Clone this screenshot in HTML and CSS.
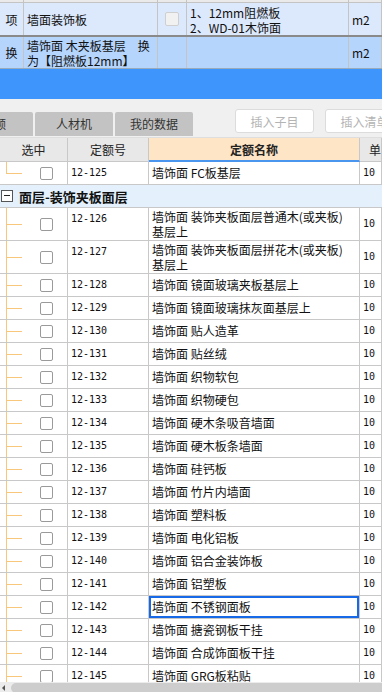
FILE: index.html
```html
<!DOCTYPE html>
<html lang="zh-CN">
<head>
    <meta charset="UTF-8">
    <meta name="viewport" content="width=device-width, initial-scale=1.0">
    <title>定额库</title>
    <link rel="stylesheet" href="styles.css">
</head>
<body>
    <!-- 清单/定额 上方表格 -->
    <div class="top">
        <div class="top-head">
            <div class="tcell c">类别</div>
            <div class="tcell">名称</div>
            <div class="tcell c">锁定</div>
            <div class="tcell">项目特征</div>
            <div class="tcell">单位</div>
        </div>
        <div class="top-row item">
            <div class="tcell c">项</div>
            <div class="tcell">墙面装饰板</div>
            <div class="tcell c"><span class="lock"></span></div>
            <div class="tcell multi">1、12mm阻燃板<br>2、WD-01木饰面</div>
            <div class="tcell">m2</div>
        </div>
        <div class="top-row sel">
            <div class="tcell c">换</div>
            <div class="tcell multi">墙饰面 木夹板基层　换<br>为【阻燃板12mm】</div>
            <div class="tcell"></div>
            <div class="tcell"></div>
            <div class="tcell">m2</div>
        </div>
    </div>
    <div class="bar"></div>

    <div class="toolbar">
        <div class="tabs">
            <div class="tab">定额</div>
            <div class="tab">人材机</div>
            <div class="tab">我的数据</div>
        </div>
        <div class="btns">
            <button class="btn">插入子目</button>
            <button class="btn">插入清单</button>
        </div>
    </div>

    <div class="grid">
        <div class="row head">
            <div class="cell c">选中</div>
            <div class="cell c">定额号</div>
            <div class="cell c name-head">定额名称</div>
            <div class="cell unit-head">单位</div>
        </div>
        <div class="body">
            <div class="row">
                <div class="cell chk end"><span class="box"></span></div>
                <div class="cell code">12-125</div>
                <div class="cell">墙饰面 FC板基层</div>
                <div class="cell unit">10</div>
            </div>
            <div class="group"><span class="minus"></span>面层-装饰夹板面层</div>
            <div class="row tall">
                <div class="cell chk"><span class="box"></span></div>
                <div class="cell code">12-126</div>
                <div class="cell multi">墙饰面 装饰夹板面层普通木(或夹板)<br>基层上</div>
                <div class="cell unit">10</div>
            </div>
            <div class="row tall">
                <div class="cell chk"><span class="box"></span></div>
                <div class="cell code">12-127</div>
                <div class="cell multi">墙饰面 装饰夹板面层拼花木(或夹板)<br>基层上</div>
                <div class="cell unit">10</div>
            </div>
            <div class="row">
                <div class="cell chk"><span class="box"></span></div>
                <div class="cell code">12-128</div>
                <div class="cell">墙饰面 镜面玻璃夹板基层上</div>
                <div class="cell unit">10</div>
            </div>
            <div class="row">
                <div class="cell chk"><span class="box"></span></div>
                <div class="cell code">12-129</div>
                <div class="cell">墙饰面 镜面玻璃抹灰面基层上</div>
                <div class="cell unit">10</div>
            </div>
            <div class="row">
                <div class="cell chk"><span class="box"></span></div>
                <div class="cell code">12-130</div>
                <div class="cell">墙饰面 贴人造革</div>
                <div class="cell unit">10</div>
            </div>
            <div class="row">
                <div class="cell chk"><span class="box"></span></div>
                <div class="cell code">12-131</div>
                <div class="cell">墙饰面 贴丝绒</div>
                <div class="cell unit">10</div>
            </div>
            <div class="row">
                <div class="cell chk"><span class="box"></span></div>
                <div class="cell code">12-132</div>
                <div class="cell">墙饰面 织物软包</div>
                <div class="cell unit">10</div>
            </div>
            <div class="row">
                <div class="cell chk"><span class="box"></span></div>
                <div class="cell code">12-133</div>
                <div class="cell">墙饰面 织物硬包</div>
                <div class="cell unit">10</div>
            </div>
            <div class="row">
                <div class="cell chk"><span class="box"></span></div>
                <div class="cell code">12-134</div>
                <div class="cell">墙饰面 硬木条吸音墙面</div>
                <div class="cell unit">10</div>
            </div>
            <div class="row">
                <div class="cell chk"><span class="box"></span></div>
                <div class="cell code">12-135</div>
                <div class="cell">墙饰面 硬木板条墙面</div>
                <div class="cell unit">10</div>
            </div>
            <div class="row">
                <div class="cell chk"><span class="box"></span></div>
                <div class="cell code">12-136</div>
                <div class="cell">墙饰面 硅钙板</div>
                <div class="cell unit">10</div>
            </div>
            <div class="row">
                <div class="cell chk"><span class="box"></span></div>
                <div class="cell code">12-137</div>
                <div class="cell">墙饰面 竹片内墙面</div>
                <div class="cell unit">10</div>
            </div>
            <div class="row">
                <div class="cell chk"><span class="box"></span></div>
                <div class="cell code">12-138</div>
                <div class="cell">墙饰面 塑料板</div>
                <div class="cell unit">10</div>
            </div>
            <div class="row">
                <div class="cell chk"><span class="box"></span></div>
                <div class="cell code">12-139</div>
                <div class="cell">墙饰面 电化铝板</div>
                <div class="cell unit">10</div>
            </div>
            <div class="row">
                <div class="cell chk"><span class="box"></span></div>
                <div class="cell code">12-140</div>
                <div class="cell">墙饰面 铝合金装饰板</div>
                <div class="cell unit">10</div>
            </div>
            <div class="row">
                <div class="cell chk"><span class="box"></span></div>
                <div class="cell code">12-141</div>
                <div class="cell">墙饰面 铝塑板</div>
                <div class="cell unit">10</div>
            </div>
            <div class="row">
                <div class="cell chk"><span class="box"></span></div>
                <div class="cell code">12-142</div>
                <div class="cell focus">墙饰面 不锈钢面板</div>
                <div class="cell unit">10</div>
            </div>
            <div class="row">
                <div class="cell chk"><span class="box"></span></div>
                <div class="cell code">12-143</div>
                <div class="cell">墙饰面 搪瓷钢板干挂</div>
                <div class="cell unit">10</div>
            </div>
            <div class="row">
                <div class="cell chk"><span class="box"></span></div>
                <div class="cell code">12-144</div>
                <div class="cell">墙饰面 合成饰面板干挂</div>
                <div class="cell unit">10</div>
            </div>
            <div class="row">
                <div class="cell chk"><span class="box"></span></div>
                <div class="cell code">12-145</div>
                <div class="cell">墙饰面 GRG板粘贴</div>
                <div class="cell unit">10</div>
            </div>
        </div>
    </div>

    <div class="hscroll">
        <span class="arrow"></span>
        <span class="thumb"></span>
    </div>
</body>
</html>
```

FILE: styles.css
```css
body {
    margin: 0;
    width: 382px;
    height: 692px;
    overflow: hidden;
    font-family: "Noto Sans CJK SC", sans-serif;
    font-size: 12px;
    color: #111;
    background: #fff;
}

/* upper table */
.top {
    overflow: hidden;
}
.top-head, .top-row {
    display: grid;
    grid-template-columns: 24px 134px 29px 162px 33px;
}
.top-head {
    height: 22px;
    margin-top: -19px;
    background: #eaeaea;
    border-bottom: 1px solid #c4c4c4;
    box-sizing: border-box;
}
.tcell {
    border-right: 1px solid #c4c4c4;
    padding-left: 3px;
    display: flex;
    align-items: center;
    white-space: nowrap;
    overflow: hidden;
}
.tcell.c {
    justify-content: center;
    padding-left: 0;
}
.tcell.multi {
    line-height: 15px;
}
.top-row.item {
    height: 32px;
    background: #dce8fc;
    border-bottom: 2px solid #8a8a8a;
}
.top-row.sel {
    height: 31px;
    background: #b5d5fd;
    border-bottom: 1px solid #9ab;
}
.lock {
    width: 12px;
    height: 12px;
    border: 1px solid #cfcfcf;
    border-radius: 2px;
    background: #f1f1f1;
}
.bar {
    height: 30px;
    background: #3e96fc;
}

/* toolbar with tabs */
.toolbar {
    height: 38px;
    background: #f0f0f0;
    display: flex;
    align-items: flex-end;
    overflow: hidden;
}
.tabs {
    display: flex;
    gap: 2px;
    margin-left: -45px;
    margin-bottom: 1px;
}
.tab {
    width: 78px;
    height: 24px;
    line-height: 24px;
    text-align: center;
    background: #c3c3c3;
    color: #333;
    border-radius: 2px 2px 0 0;
    font-size: 12px;
}
.btns {
    display: flex;
    gap: 11px;
    align-self: flex-start;
    margin-top: 10px;
    margin-left: 42px;
}
.btn {
    width: 79px;
    height: 24px;
    flex-shrink: 0;
    border: 1px solid #dcdcdc;
    border-radius: 3px;
    background: #fff;
    color: #b4b4b4;
    font-family: "Noto Sans CJK SC", sans-serif;
    font-size: 12px;
    padding: 0;
}

/* lower table */
.row {
    display: grid;
    grid-template-columns: 68px 81px 211px 22px;
    height: 23px;
}
.row.tall {
    height: 33px;
}
.cell {
    border-right: 1px solid #c8c8c8;
    border-bottom: 1px solid #c8c8c8;
    padding-left: 3px;
    line-height: 22px;
    white-space: nowrap;
    overflow: hidden;
    box-sizing: border-box;
    position: relative;
}
.cell.c {
    text-align: center;
    padding-left: 0;
}
.row.head {
    height: 24px;
    background: #e8e8e8;
    border-top: 1px solid #dedede;
}
.row.head .cell {
    line-height: 23px;
    color: #222;
}
.row.head .unit-head {
    padding-left: 9px;
}
.name-head {
    background: #fde5c6;
    font-weight: bold;
    border-bottom: 2px solid #4a95ee !important;
}
.body {
    height: 520px;
    overflow: hidden;
}
.code {
    font-family: "DejaVu Sans Mono", monospace;
    font-size: 10px;
}
.multi {
    line-height: 15px;
    padding-top: 1px;
}
.row.tall .unit {
    line-height: 32px;
}
.unit {
    font-family: "DejaVu Sans Mono", monospace;
    font-size: 10px;
}
.focus {
    box-shadow: inset 0 0 0 2px #1769e8;
}

/* tree lines and checkbox */
.chk {
    display: flex;
    align-items: center;
    padding-left: 40px;
}
.chk::before {
    content: "";
    position: absolute;
    left: 6px;
    top: 0;
    bottom: -1px;
    border-left: 1px solid #f8c77c;
}
.chk.end::before {
    bottom: 50%;
}
.chk::after {
    content: "";
    position: absolute;
    left: 6px;
    width: 16px;
    top: 50%;
    border-top: 1px solid #f8c77c;
}
.box {
    width: 11px;
    height: 11px;
    border: 1px solid #9a9a9a;
    border-radius: 2px;
    background: #fff;
}
.group {
    height: 23px;
    box-sizing: border-box;
    background: #e4f1fc;
    border-bottom: 1px solid #c8c8c8;
    display: flex;
    align-items: center;
    font-weight: bold;
    font-size: 13px;
    color: #111;
}
.minus {
    width: 10px;
    height: 10px;
    border: 1px solid #555;
    background: #fff;
    margin: 0 6px 0 1px;
    position: relative;
}
.minus::after {
    content: "";
    position: absolute;
    left: 2px;
    right: 2px;
    top: 4px;
    border-top: 1px solid #222;
}

/* scrollbar */
.hscroll {
    height: 12px;
    background: #ececec;
    display: flex;
    align-items: center;
}
.arrow {
    width: 0;
    height: 0;
    border-right: 3px solid #555;
    border-top: 3px solid transparent;
    border-bottom: 3px solid transparent;
    margin: 0 6px 0 2px;
}
.thumb {
    flex: 1;
    height: 10px;
    background: #cdcdcd;
    border-radius: 5px 0 0 5px;
}
```
